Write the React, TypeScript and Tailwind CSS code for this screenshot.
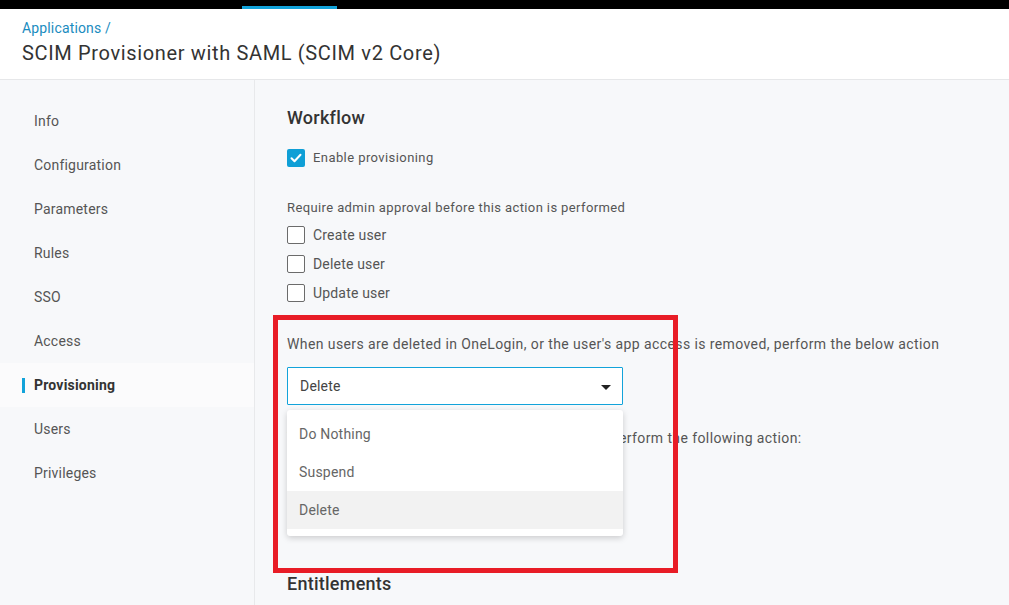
import React from "react";

const navItems = [
  "Info",
  "Configuration",
  "Parameters",
  "Rules",
  "SSO",
  "Access",
  "Provisioning",
  "Users",
  "Privileges",
];

function Checkbox({ checked, label, size = "text-[14px] tracking-[0.18px]" }: { checked?: boolean; label: string; size?: string }) {
  return (
    <label className="flex items-center h-[18px]">
      {checked ? (
        <span className="w-[18px] h-[18px] rounded-[2px] bg-[#0f9fd6] flex items-center justify-center">
          <svg width="12" height="10" viewBox="0 0 12 10" fill="none">
            <path d="M1.5 5.2 4.5 8.2 10.5 1.8" stroke="white" strokeWidth="2" strokeLinecap="round" strokeLinejoin="round" />
          </svg>
        </span>
      ) : (
        <span className="w-[18px] h-[18px] rounded-[2px] border border-[#6b6b6b] bg-white" />
      )}
      <span className={`ml-[8px] ${size} text-[#555]`}>{label}</span>
    </label>
  );
}

export default function App() {
  return (
    <div className="relative h-[605px] w-[1009px] overflow-hidden bg-[#f7f8fa] font-['Roboto',sans-serif]">
      {/* top nav strip */}
      <div className="h-[9px] bg-black flex items-end">
        <div className="ml-[242px] w-[95px] h-[3px] bg-[#12a3da]" />
      </div>

      {/* header */}
      <div className="h-[71px] bg-white border-b border-[#e6e7e9] pl-[22px] pt-[10px]">
        <div className="text-[14px] leading-[18px] tracking-[0.15px] text-[#1a8cc0]">Applications /</div>
        <h1 className="mt-[4px] text-[20px] leading-[24px] tracking-[0.65px] text-[#333]">
          SCIM Provisioner with SAML (SCIM v2 Core)
        </h1>
      </div>

      <div className="flex">
        {/* sidebar */}
        <nav className="w-[255px] h-[525px] border-r border-[#e8e9eb] pt-[19px]">
          {navItems.map((item) => {
            const active = item === "Provisioning";
            return (
              <div
                key={item}
                className={`relative h-[44px] flex items-center pl-[34px] text-[14px] tracking-[0.2px] ${
                  active ? "bg-[#fbfbfc] font-bold text-[#333]" : "text-[#555]"
                }`}
              >
                {active && <span className="absolute left-[22px] top-[15px] w-[3px] h-[15px] bg-[#12a3da]" />}
                {item}
              </div>
            );
          })}
        </nav>

        {/* content */}
        <main className="flex-1 pl-[32px] pt-[26px]">
          <h2 className="text-[18px] leading-[24px] tracking-[0.25px] font-medium text-[#333]">Workflow</h2>
          <div className="mt-[19px]">
            <Checkbox checked label="Enable provisioning" size="text-[13px] tracking-[0.42px]" />
          </div>

          <p className="mt-[33px] text-[13px] leading-[16px] tracking-[0.39px] text-[#555]">
            Require admin approval before this action is performed
          </p>
          <div className="mt-[10px] flex flex-col gap-[11px]">
            <Checkbox label="Create user" />
            <Checkbox label="Delete user" />
            <Checkbox label="Update user" />
          </div>

          <p className="mt-[32px] text-[14px] leading-[20px] tracking-[0.4px] text-[#555]">
            When users are deleted in OneLogin, or the user's app access is removed, perform the below action
          </p>

          <div className="relative mt-[13px] w-[336px]">
            <div className="h-[38px] bg-white border border-[#12a3da] rounded-[1px] flex items-center justify-between pl-[12px] pr-[11px]">
              <span className="text-[14px] tracking-[0.2px] text-[#444]">Delete</span>
              <svg width="10" height="5" viewBox="0 0 10 5" className="mt-[3px]">
                <path d="M0 0h10L5 5z" fill="#222" />
              </svg>
            </div>

            {/* open menu */}
            <div className="absolute left-0 top-[43px] z-10 w-[336px] bg-white rounded-[3px] shadow-[0_2px_6px_rgba(0,0,0,0.18)] pt-[5px] pb-[7px]">
              {["Do Nothing", "Suspend", "Delete"].map((opt) => (
                <div
                  key={opt}
                  className={`h-[38px] flex items-center pl-[12px] text-[14px] tracking-[0.2px] text-[#666] ${
                    opt === "Delete" ? "bg-[#f2f2f2] text-[#555]" : ""
                  }`}
                >
                  {opt}
                </div>
              ))}
            </div>
          </div>

          <p className="mt-[23px] text-[14px] leading-[20px] tracking-[0.4px] text-[#555] whitespace-nowrap">
            <span className="tracking-[0.26px]">When user accounts are suspended in a directory, p</span>
            erform the following action:
          </p>

          <h2 className="mt-[124px] text-[18px] leading-[24px] tracking-[0.25px] font-medium text-[#333]">Entitlements</h2>
        </main>
      </div>

      {/* red annotation box */}
      <div className="absolute left-[273px] top-[315px] w-[405px] h-[258px] border-[5px] border-[#e81c26] z-20 pointer-events-none" />
    </div>
  );
}
